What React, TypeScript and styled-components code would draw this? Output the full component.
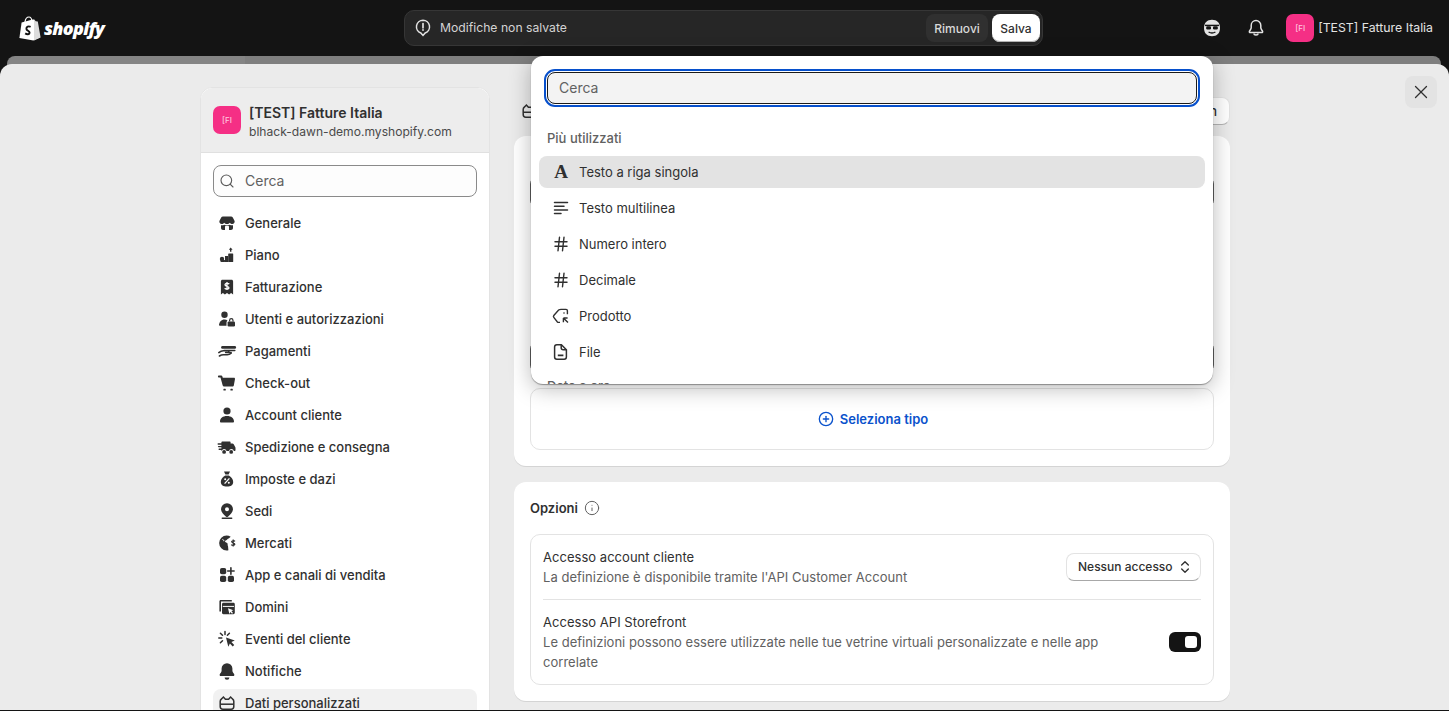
import React from "react";
import styled, { createGlobalStyle } from "styled-components";
import { ChevronsUpDown, CirclePlus, Hash, Info, Search, X } from "lucide-react";

const GlobalStyle = createGlobalStyle`
  html, body {
    margin: 0;
    padding: 0;
    height: 100%;
    overflow: hidden;
    background: #141414;
    font-family: Inter, "Liberation Sans", sans-serif;
    font-size: 13px;
    line-height: 20px;
    color: #303030;
  }
  * {
    box-sizing: border-box;
  }
`;

const Page = styled.div`
  position: relative;
  width: 1449px;
  height: 711px;
  overflow: hidden;
  background: #141414;
`;

const TopBar = styled.header`
  display: flex;
  align-items: center;
  height: 56px;
  padding: 0 16px 0 19px;
`;

const LogoBlock = styled.div`
  display: flex;
  align-items: center;
  gap: 3px;
  width: 385px;
  color: #fff;
`;

const LogoWord = styled.span`
  font-family: "Open Sans", "Liberation Sans", sans-serif;
  font-size: 18px;
  font-style: italic;
  font-weight: 800;
  letter-spacing: -0.7px;
`;

const SaveBar = styled.div`
  display: flex;
  align-items: center;
  width: 639px;
  height: 36px;
  padding: 0 2px 0 10px;
  border: 1px solid #363636;
  border-radius: 10px;
  background: #262626;
  color: #d4d4d4;
`;

const SaveMessage = styled.span`
  margin-left: 9px;
  margin-right: auto;
  font-size: 12.2px;
`;

const BarButton = styled.button<{ $primary?: boolean }>`
  height: 28px;
  margin-left: 4px;
  padding: 0;
  width: ${({ $primary }) => ($primary ? "48px" : "62px")};
  border: 0;
  border-radius: 8px;
  font: 500 12px Inter, sans-serif;
  color: ${({ $primary }) => ($primary ? "#303030" : "#d9d9d9")};
  background: ${({ $primary }) => ($primary ? "#fff" : "#303030")};
  box-shadow: ${({ $primary }) => ($primary ? "inset 0 -1px 0 #b5b5b5" : "none")};
`;

const TopRight = styled.div`
  display: flex;
  align-items: center;
  margin-left: auto;
  color: #e3e3e3;
`;

const TopIcon = styled.span`
  display: flex;
  align-items: center;
  justify-content: center;
  width: 32px;
  height: 32px;
  margin-right: 12px;
`;

const StoreChip = styled.div`
  display: flex;
  align-items: center;
  margin-left: 2px;
`;

const Avatar = styled.span`
  display: flex;
  align-items: center;
  justify-content: center;
  flex: none;
  width: 28px;
  height: 28px;
  border-radius: 7px;
  background: #f52f85;
  color: #ffc4dd;
  font-size: 8px;
  font-weight: 500;
`;

const StoreName = styled.span`
  margin-left: 4px;
  font-size: 12.3px;
  color: #e3e3e3;
`;

const BackSheet = styled.div`
  height: 20px;
  margin: 0 8px -12px 7px;
  border-radius: 8px 8px 0 0;
  background: linear-gradient(to right, #858585 238px, #7f7f7f 238px);
`;

const Sheet = styled.main`
  position: relative;
  display: flex;
  align-items: flex-start;
  gap: 24px;
  height: 646px;
  padding: 23px 0 0 200px;
  overflow: hidden;
  border-radius: 12px 12px 0 0;
  background: #ebebeb;
`;

const CloseButton = styled.button`
  position: absolute;
  top: 12px;
  right: 12px;
  display: flex;
  align-items: center;
  justify-content: center;
  width: 32px;
  height: 32px;
  padding: 0;
  border: 0;
  border-radius: 8px;
  background: #e3e3e3;
  color: #303030;
`;

const Sidebar = styled.aside`
  flex: none;
  width: 290px;
  height: 640px;
  border: 1px solid #e3e3e3;
  border-radius: 12px 12px 0 0;
  background: #fff;
`;

const SideHeader = styled.div`
  display: flex;
  align-items: center;
  gap: 8px;
  height: 65px;
  padding: 0 12px;
  border-bottom: 1px solid #e0e0e0;
  border-radius: 12px 12px 0 0;
  background: #ededed;
`;

const ShopText = styled.div`
  padding-top: 3px;
`;

const ShopTitle = styled.div`
  font-size: 14px;
  font-weight: 600;
  line-height: 20px;
`;

const ShopDomain = styled.div`
  font-size: 12.1px;
  line-height: 18px;
  color: #4a4a4a;
`;

const SideBody = styled.div`
  padding: 12px;
`;

const SearchBox = styled.div`
  display: flex;
  align-items: center;
  gap: 10px;
  height: 32px;
  padding: 0 5px;
  border: 1px solid #8a8a8a;
  border-radius: 8px;
  background: #fdfdfd;
  color: #616161;
  font-size: 14px;
`;

const NavList = styled.nav`
  display: flex;
  flex-direction: column;
  gap: 4px;
  margin-top: 12px;
`;

const NavItem = styled.div<{ $active?: boolean }>`
  display: flex;
  align-items: center;
  flex: none;
  gap: 8px;
  height: 28px;
  padding-left: 4px;
  border-radius: 8px;
  font-weight: 500;
  background: ${({ $active }) => ($active ? "#f1f1f1" : "transparent")};
`;

const Glyph = styled.svg`
  flex: none;
  width: 20px;
  height: 20px;
  fill: #303030;
`;

const Content = styled.section`
  flex: none;
  width: 716px;
  padding-top: 10px;
`;

const TitleRow = styled.div`
  display: flex;
  align-items: center;
  justify-content: space-between;
  height: 28px;
  margin-bottom: 11px;
  padding-left: 6px;
`;

const TitleGroup = styled.div`
  display: flex;
  align-items: center;
  gap: 6px;
  font-weight: 650;
`;

const SmallButton = styled.button`
  height: 28px;
  padding: 0 12px;
  border: 1px solid #e3e3e3;
  border-bottom-color: #b5b5b5;
  border-radius: 8px;
  background: #fff;
  font: 500 13px Inter, sans-serif;
  color: #303030;
`;

const Card = styled.div`
  margin-bottom: 16px;
  padding: 16px;
  border-radius: 12px;
  background: #fff;
  box-shadow: 0 1px 0 #d4d4d4;
`;

const FieldInput = styled.div<{ $gap: number }>`
  height: 32px;
  margin-top: ${({ $gap }) => $gap}px;
  border: 1px solid #5c5c5c;
  border-radius: 8px;
  background: #fff;
`;

const TypeBox = styled.div`
  display: flex;
  align-items: center;
  justify-content: center;
  gap: 6px;
  height: 62px;
  margin-top: 15px;
  padding-left: 2px;
  border: 1px solid #e3e3e3;
  border-radius: 10px;
  font-weight: 600;
  color: #0a52cc;
`;

const CardHeading = styled.div`
  display: flex;
  align-items: center;
  gap: 6px;
  margin-bottom: 16px;
  font-weight: 600;
  color: #303030;
`;

const OptionsBox = styled.div`
  padding: 0 12px;
  border: 1px solid #e3e3e3;
  border-radius: 10px;
`;

const OptionRow = styled.div<{ $divided?: boolean }>`
  display: flex;
  align-items: center;
  justify-content: space-between;
  padding: 12px 0;
  border-bottom: ${({ $divided }) => ($divided ? "1px solid #e3e3e3" : "0")};
`;

const OptionText = styled.div`
  max-width: 570px;
  color: #616161;
  letter-spacing: 0.03px;
`;

const OptionTitle = styled.div`
  color: #303030;
`;

const SelectBox = styled.div`
  display: flex;
  align-items: center;
  justify-content: space-between;
  width: 135px;
  height: 28px;
  padding: 0 7px 0 11px;
  border: 1px solid #e3e3e3;
  border-bottom-color: #a8a8a8;
  border-radius: 8px;
  background: #fff;
  font-size: 12px;
  font-weight: 500;
`;

const Toggle = styled.div`
  display: flex;
  align-items: center;
  justify-content: flex-end;
  width: 32px;
  height: 20px;
  padding-right: 4px;
  border-radius: 6px;
  background: #141414;
`;

const ToggleKnob = styled.span`
  width: 12px;
  height: 12px;
  border-radius: 3px;
  background: #fff;
`;

const Popover = styled.div`
  position: absolute;
  top: 56px;
  left: 531px;
  width: 682px;
  height: 328px;
  padding: 16px;
  overflow: hidden;
  border-radius: 12px;
  background: #fff;
  box-shadow: 0 1px 1px rgba(0, 0, 0, 0.35), 0 4px 22px rgba(0, 0, 0, 0.28);
`;

const PopSearch = styled.div`
  display: flex;
  align-items: center;
  height: 32px;
  padding: 0 11px;
  border: 1px solid #1a1a1a;
  border-radius: 8px;
  background: #f3f3f3;
  outline: 2px solid #0750cc;
  outline-offset: 1px;
  color: #616161;
  font-size: 14px;
`;

const GroupLabel = styled.div<{ $top: number }>`
  margin-top: ${({ $top }) => $top}px;
  margin-bottom: 8px;
  font-weight: 500;
  color: #616161;
`;

const OptionList = styled.div`
  display: flex;
  flex-direction: column;
  gap: 4px;
  margin: 0 -8px;
`;

const TypeOption = styled.div<{ $active?: boolean }>`
  display: flex;
  align-items: center;
  gap: 8px;
  height: 32px;
  padding-left: 12px;
  border-radius: 8px;
  background: ${({ $active }) => ($active ? "#e3e3e3" : "transparent")};
  color: #303030;
`;

const OptionIcon = styled.span`
  display: flex;
  align-items: center;
  justify-content: center;
  width: 20px;
  height: 20px;
  color: #303030;
`;

const SerifMark = styled.span`
  font-family: "Liberation Serif", serif;
  font-size: 19px;
  font-weight: 700;
  line-height: 20px;
`;

const ShopifyBag = () => (
  <svg width="22" height="25" viewBox="0 0 22 25" aria-hidden="true">
    <path
      d="M2.6 6.6 L13.6 3.6 L15.2 3.6 L20.8 21.6 L14.4 24.6 L0.4 22 Z"
      fill="#fff"
    />
    <path
      d="M6 6 C6.4 3 8.2 1 10 1 C11.6 1 12.6 2.6 12.8 5"
      fill="none"
      stroke="#fff"
      strokeWidth="1.2"
    />
    <path d="M15 3.6 L16.8 5.2 L18.8 5.6 L21.6 21.6 L15 24.4 Z" fill="#dcdcdc" />
    <path
      d="M11.6 10.8 C9.6 9.8 7.2 10.8 7.4 12.8 C7.6 14.8 10.6 14.8 10.6 16.8 C10.6 18.6 8 18.6 6.2 17.4"
      fill="none"
      stroke="#141414"
      strokeWidth="1.9"
    />
  </svg>
);

const AlertBubble = () => (
  <svg width="16" height="18" viewBox="0 0 16 18" aria-hidden="true" fill="none" stroke="#e3e3e3" strokeWidth="1.5">
    <path d="M8 1.2a6.6 6.6 0 0 1 2.2 12.8L8 16.4 5.8 14A6.6 6.6 0 0 1 8 1.2z" />
    <path d="M8 4.6v4.2" strokeLinecap="round" strokeWidth="1.7" />
    <circle cx="8" cy="11" r="0.9" fill="#e3e3e3" stroke="none" />
  </svg>
);

const SidekickFace = () => (
  <svg width="18" height="18" viewBox="0 0 18 18" aria-hidden="true">
    <path d="M9 .8c5 0 8 3 8 8.200s-3 8.200-8 8.200-8-3-8-8.200S4 .8 9 .8z" fill="#e3e3e3" />
    <path d="M2 6.400h14" stroke="#141414" strokeWidth="1.400" />
    <rect x="3.200" y="7.200" width="4.800" height="3.200" rx="1.200" fill="#141414" />
    <rect x="10" y="7.200" width="4.800" height="3.200" rx="1.200" fill="#141414" />
    <path d="M5.600 13c2 1.200 4.800 1.200 6.800 0" fill="none" stroke="#141414" strokeWidth="1.400" />
  </svg>
);

const BellOutline = () => (
  <svg width="16" height="18" viewBox="0 0 16 18" aria-hidden="true" fill="none" stroke="#e3e3e3" strokeWidth="1.5">
    <path d="M8 1.6a4.8 4.8 0 0 1 4.8 4.8v2.4c0 1.4 1.4 2.6 1.8 3.6.2.6-.2 1.1-.8 1.1H2.2c-.6 0-1-.5-.8-1.1.4-1 1.8-2.2 1.8-3.6V6.4A4.8 4.8 0 0 1 8 1.600z" />
    <path d="M6 14.400c0 2 4 2 4 0" />
  </svg>
);

const DataOutline = () => (
  <Glyph viewBox="0 0 20 20" style={{ fill: "none", stroke: "#303030", strokeWidth: 1.5 }}>
    <path d="M4.500 6 L6.400 4 L8.400 6.200 H11.600 L13.600 4 L15.500 6 C16.400 6.500 16.800 7.200 16.800 8.200 V13.600 A2.600 2.600 0 0 1 14.200 16.200 H5.800 A2.600 2.600 0 0 1 3.200 13.600 V8.200 C3.200 7.200 3.600 6.500 4.500 6 Z" />
    <path d="M3.400 11.200 H16.600" />
  </Glyph>
);

const navIcons: Record<string, React.ReactNode> = {
  store: (
    <>
      <path d="M6 3.400h8c.8 0 1.400.4 1.800 1.100l1.800 3.600c.4 1.500-.7 3-2.300 3-1.100 0-1.900-.5-2.500-1.300-.6.8-1.600 1.300-2.800 1.300s-2.200-.5-2.800-1.300c-.6.8-1.400 1.300-2.500 1.300-1.600 0-2.700-1.500-2.300-3l1.800-3.600C4.600 3.800 5.200 3.400 6 3.400z" />
      <path d="M4 12.200c.9.300 2.200.2 3.200-.4.800.5 1.800.7 2.800.7s2-.2 2.800-.7c1 .6 2.300.7 3.200.4v2.800c0 1.100-.9 2-2 2H6c-1.100 0-2-.9-2-2v-2.800z" />
      <rect x="8" y="13" width="4" height="4" rx="0.600" fill="#fff" />
    </>
  ),
  plan: (
    <>
      <circle cx="5" cy="14" r="2.200" />
      <rect x="8" y="11" width="3.200" height="6" />
      <rect x="11.200" y="8.400" width="5" height="8.600" rx="0.600" />
      <path d="M13.700 2.600l1.900 2.200h-1.200v2h-1.400v-2h-1.200z" />
      <rect x="3.400" y="15" width="5" height="2" rx="1" />
    </>
  ),
  billing: (
    <>
      <path d="M5.500 2.800h9c.9 0 1.600.7 1.600 1.600v13l-2-1.300-2 1.300-2.100-1.300-2.100 1.300-2-1.300-2 1.300v-13c0-.9.7-1.600 1.600-1.600z" />
      <path d="M12.200 7c-.6-.8-3.900-1.300-4.200.6-.3 2 4.200 1.300 4 3.300-.2 1.700-3.400 1.400-4.300.4M10 5v8" fill="none" stroke="#fff" strokeWidth="1.300" />
    </>
  ),
  users: (
    <>
      <circle cx="7.500" cy="5.800" r="3.200" />
      <path d="M2 16.600c0-3.400 2.400-6 5.500-6 1.200 0 2.200.3 3 .9-.6.5-1 1.200-1 2v3.200H3.200c-.7 0-1.200-.4-1.200-1z" />
      <rect x="10.600" y="12.400" width="7.400" height="5" rx="1.200" />
      <path d="M12.600 12.600v-1.200a1.700 1.700 0 0 1 3.400 0v1.200" fill="none" stroke="#303030" strokeWidth="1.200" />
    </>
  ),
  payments: (
    <g fill="none" stroke="#303030" strokeWidth="1.500" strokeLinecap="round">
      <path d="M5.400 6.400h12.400" strokeWidth="2.600" />
      <path d="M7 9.600h10.800M1.800 11.600c1.600-1.400 3-1.900 4.600-1.900h4.600c1.200 0 1.200 1.900 0 1.900H8.600" />
      <path d="M11.600 11.600h2.600M2.400 15c1.400-.9 2.600-1.200 4.200-1.200h3.600c1.400 0 2.800-.5 4-1.600" />
    </g>
  ),
  cart: (
    <>
      <path d="M1.800 2.600h2.400c.6 0 1 .3 1.200.9l.4 1.300h11.200c.7 0 1.100.6 1 1.200l-1.200 6.400c-.1.7-.7 1.100-1.300 1.100H7c-.6 0-1.100-.4-1.300-1L3.500 4.400H1.800a.9.900 0 0 1 0-1.800z" />
      <rect x="6.400" y="15.800" width="2.400" height="1.800" rx="0.600" />
      <rect x="13.400" y="15.800" width="2.400" height="1.800" rx="0.600" />
    </>
  ),
  person: (
    <>
      <circle cx="10" cy="6" r="3.600" />
      <path d="M3 16.400c0-3.200 2.800-5.400 7-5.400s7 2.200 7 5.400c0 .7-.5 1.100-1.200 1.100H4.200c-.7 0-1.200-.4-1.200-1.100z" />
    </>
  ),
  truck: (
    <>
      <path d="M6.600 4.400h6c.6 0 1 .4 1 1v1.200h1.800c.6 0 1 .2 1.300.7l1.500 2.600c.2.3.3.6.3 1V13c0 .6-.4 1-1 1h-.6a2.600 2.600 0 0 0-5 0H9.600a2.600 2.600 0 0 0-5 0H4.400V5.400c0-.6.500-1 1-1z" />
      <circle cx="7.100" cy="14.900" r="1.900" />
      <circle cx="14.200" cy="14.900" r="1.900" />
      <path d="M1.200 7h5M1.600 9.600h5M2.200 12.200h2.600" stroke="#303030" strokeWidth="1.400" strokeLinecap="round" />
    </>
  ),
  tax: (
    <>
      <path d="M7 2.400h6l-1.400 3.200H8.400z" />
      <path d="M8.200 6.400h3.600c2.400 1.400 4.400 3.800 4.400 6.600 0 3-2.400 4.600-6.200 4.600s-6.200-1.600-6.200-4.600c0-2.800 2-5.200 4.400-6.600z" />
      <path d="M12.400 9.400l-4.800 5.200" stroke="#fff" strokeWidth="1.300" />
      <circle cx="8.200" cy="10.200" r="1" fill="#fff" />
      <circle cx="11.800" cy="13.800" r="1" fill="#fff" />
    </>
  ),
  pin: (
    <>
      <path fillRule="evenodd" d="M10 2.200a6 6 0 0 1 6 6c0 2.800-2.800 5.400-4.800 7.200a1.800 1.800 0 0 1-2.400 0C6.800 13.600 4 11 4 8.200a6 6 0 0 1 6-6zm0 4a2 2 0 1 0 0 4 2 2 0 0 0 0-4z" />
      <rect x="4.600" y="16.400" width="10.800" height="1.500" rx="0.700" />
    </>
  ),
  globe: (
    <>
      <path d="M9.600 2.600c1.500 0 2.900.4 4.100 1.100l-1.700 1.500c-.6.500-1.400.5-1.800 1.300-.5 1-2.400.8-2.200 2 .2 1 1.800.8 2.400 1.700.5.800 0 2 .6 2.800l.4 4.300c-.5.100-1.100.2-1.800.2a7.400 7.400 0 0 1 0-14.900z" />
      <path d="M5.400 6.400c1 .2 1.600.8 1.400 1.800" fill="none" stroke="#fff" strokeWidth="1" />
      <path d="M18 8.400c-.8-.9-3.200-1-3.400.3-.2 1.400 3.400 1 3.200 2.600-.2 1.300-2.700 1.200-3.600.3M16.200 6.400v7.200" fill="none" stroke="#303030" strokeWidth="1.200" />
    </>
  ),
  apps: (
    <>
      <rect x="3" y="3" width="6.200" height="6.200" rx="1.800" />
      <rect x="3" y="10.800" width="6.200" height="6.200" rx="1.800" />
      <rect x="10.800" y="10.800" width="6.200" height="6.200" rx="1.800" />
      <path d="M13.900 2.800v6.400M10.700 6h6.400" stroke="#303030" strokeWidth="1.600" strokeLinecap="round" />
    </>
  ),
  domains: (
    <>
      <path d="M2.400 4.400c0-.8.600-1.400 1.400-1.400h11v1.600H4v9.800H2.400z" />
      <path d="M6.400 5.800h10c.8 0 1.400.6 1.400 1.400v8.600c0 .8-.6 1.400-1.400 1.400h-10c-.8 0-1.400-.6-1.400-1.400V7.200c0-.8.600-1.400 1.400-1.400z" />
      <path d="M5.800 9.400h11.200" stroke="#fff" strokeWidth="1" />
      <path d="M11 11.200l5.400 2-2 .9 1.600 1.800-1 .9-1.600-1.800-1 2z" fill="#fff" />
    </>
  ),
  events: (
    <>
      <path d="M9 8.400l8.800 3.200-3.400 1.500 2.800 3-1.500 1.400-2.800-3-1.600 3.300z" />
      <path d="M8 2.400v3M3.400 4.200l2.100 2.100M1.800 9h3M3.400 13.800l2.100-2.100M12.400 4.200l-2 2" stroke="#303030" strokeWidth="1.500" strokeLinecap="round" />
    </>
  ),
  bell: (
    <>
      <path d="M10 2.200a5.400 5.400 0 0 1 5.400 5.400v2.200c0 1.400 1.400 2.600 1.900 3.700.3.800-.2 1.500-1 1.500H3.700c-.8 0-1.300-.7-1-1.500.5-1.100 1.900-2.300 1.900-3.700V7.600A5.400 5.400 0 0 1 10 2.200z" />
      <path d="M7.600 16.400h4.800a2.400 2.400 0 0 1-4.800 0z" />
    </>
  ),
};

const NavIcon = ({ name }: { name: string }) => (
  <Glyph viewBox="0 0 20 20" aria-hidden="true">
    {navIcons[name]}
  </Glyph>
);

const navItems = [
  ["store", "Generale"],
  ["plan", "Piano"],
  ["billing", "Fatturazione"],
  ["users", "Utenti e autorizzazioni"],
  ["payments", "Pagamenti"],
  ["cart", "Check-out"],
  ["person", "Account cliente"],
  ["truck", "Spedizione e consegna"],
  ["tax", "Imposte e dazi"],
  ["pin", "Sedi"],
  ["globe", "Mercati"],
  ["apps", "App e canali di vendita"],
  ["domains", "Domini"],
  ["events", "Eventi del cliente"],
  ["bell", "Notifiche"],
];

const TextLines = () => (
  <svg width="18" height="18" viewBox="0 0 18 18" fill="none" stroke="#303030" strokeWidth="1.500" strokeLinecap="round" aria-hidden="true">
    <path d="M2.500 3.500h13M2.500 7.200h9.500M2.500 10.900h13M2.500 14.600h6.500" />
  </svg>
);

const TagCursor = () => (
  <svg width="18" height="18" viewBox="0 0 18 18" fill="none" stroke="#303030" strokeWidth="1.400" aria-hidden="true">
    <path d="M9 2.400h5c.8 0 1.400.6 1.400 1.400v3.400M8 15.400H6.400c-.4 0-.8-.2-1-.4L1.800 10.400c-.5-.6-.5-1.300 0-1.900L6.600 3c.6-.4 1.400-.6 2.400-.6" />
    <circle cx="12" cy="6" r="0.800" fill="#303030" stroke="none" />
    <path d="M11.400 11h4.200M11.400 11v4.200M11.600 11.200l4.400 4.400" />
  </svg>
);

const FileIcon = () => (
  <svg width="18" height="18" viewBox="0 0 18 18" fill="none" stroke="#303030" strokeWidth="1.500" aria-hidden="true">
    <path d="M4.800 1.800h4.600l5 5v7.200a2.200 2.200 0 0 1-2.200 2.200H4.800A2.200 2.200 0 0 1 2.600 14V4a2.200 2.200 0 0 1 2.200-2.200z" />
    <path d="M9.200 2v2.800c0 1.100.9 2 2 2h3" />
    <path d="M5.800 12.400h5.600" strokeWidth="1.600" />
  </svg>
);

const typeOptions: [string, React.ReactNode][] = [
  ["Testo a riga singola", <SerifMark>A</SerifMark>],
  ["Testo multilinea", <TextLines />],
  ["Numero intero", <Hash size={18} strokeWidth={1.9} />],
  ["Decimale", <Hash size={18} strokeWidth={1.9} />],
  ["Prodotto", <TagCursor />],
  ["File", <FileIcon />],
];

export default function App() {
  return (
    <Page>
      <GlobalStyle />
      <TopBar>
        <LogoBlock>
          <ShopifyBag />
          <LogoWord>shopify</LogoWord>
        </LogoBlock>
        <SaveBar>
          <AlertBubble />
          <SaveMessage>Modifiche non salvate</SaveMessage>
          <BarButton>Rimuovi</BarButton>
          <BarButton $primary>Salva</BarButton>
        </SaveBar>
        <TopRight>
          <TopIcon>
            <SidekickFace />
          </TopIcon>
          <TopIcon>
            <BellOutline />
          </TopIcon>
          <StoreChip>
            <Avatar>[FI</Avatar>
            <StoreName>[TEST] Fatture Italia</StoreName>
          </StoreChip>
        </TopRight>
      </TopBar>
      <BackSheet />
      <Sheet>
        <CloseButton aria-label="Chiudi">
          <X size={22} strokeWidth={1.4} />
        </CloseButton>
        <Sidebar>
          <SideHeader>
            <Avatar>[FI</Avatar>
            <ShopText>
              <ShopTitle>[TEST] Fatture Italia</ShopTitle>
              <ShopDomain>blhack-dawn-demo.myshopify.com</ShopDomain>
            </ShopText>
          </SideHeader>
          <SideBody>
            <SearchBox>
              <Search size={16} strokeWidth={1.7} color="#5c5c5c" />
              Cerca
            </SearchBox>
            <NavList>
              {navItems.map(([icon, label]) => (
                <NavItem key={label}>
                  <NavIcon name={icon} />
                  {label}
                </NavItem>
              ))}
              <NavItem $active>
                <DataOutline />
                Dati personalizzati
              </NavItem>
            </NavList>
          </SideBody>
        </Sidebar>
        <Content>
          <TitleRow>
            <TitleGroup>
              <DataOutline />
            </TitleGroup>
            <SmallButton>Admin</SmallButton>
          </TitleRow>
          <Card>
            <FieldInput $gap={24} />
            <FieldInput $gap={133} />
            <TypeBox>
              <CirclePlus size={16} strokeWidth={2} />
              Seleziona tipo
            </TypeBox>
          </Card>
          <Card>
            <CardHeading>
              Opzioni
              <Info size={16} strokeWidth={1.5} color="#616161" />
            </CardHeading>
            <OptionsBox>
              <OptionRow $divided>
                <OptionText>
                  <OptionTitle>Accesso account cliente</OptionTitle>
                  La definizione è disponibile tramite l'API Customer Account
                </OptionText>
                <SelectBox>
                  Nessun accesso
                  <ChevronsUpDown size={16} strokeWidth={2} />
                </SelectBox>
              </OptionRow>
              <OptionRow>
                <OptionText>
                  <OptionTitle>Accesso API Storefront</OptionTitle>
                  Le definizioni possono essere utilizzate nelle tue vetrine virtuali personalizzate e nelle app correlate
                </OptionText>
                <Toggle>
                  <ToggleKnob />
                </Toggle>
              </OptionRow>
            </OptionsBox>
          </Card>
        </Content>
      </Sheet>
      <Popover>
        <PopSearch>Cerca</PopSearch>
        <GroupLabel $top={24}>Più utilizzati</GroupLabel>
        <OptionList>
          {typeOptions.map(([label, icon], index) => (
            <TypeOption key={label} $active={index === 0}>
              <OptionIcon>{icon}</OptionIcon>
              {label}
            </TypeOption>
          ))}
        </OptionList>
        <GroupLabel $top={8}>Data e ora</GroupLabel>
      </Popover>
    </Page>
  );
}
